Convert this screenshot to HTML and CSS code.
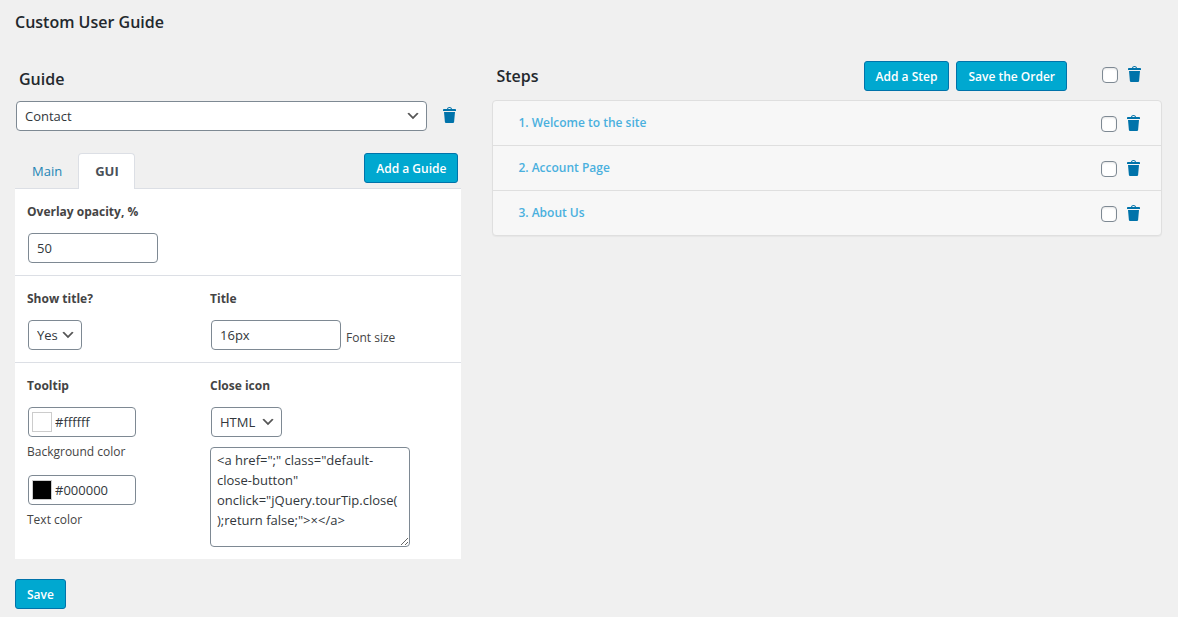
FILE: index.html
```
<!DOCTYPE html>
<html lang="en">
<head>
    <meta charset="UTF-8">
    <meta name="viewport" content="width=device-width, initial-scale=1.0">
    <title>Custom User Guide</title>
    <link rel="stylesheet" href="styles.css">
</head>
<body>
    <!-- Trash icon, reused by every delete button -->
    <svg class="sprite" aria-hidden="true">
        <symbol id="trash" viewBox="3 2 13 16">
            <path d="M12 4h3c.6 0 1 .4 1 1v1H3V5c0-.6.5-1 1-1h3c.2-1.1 1.3-2 2.5-2s2.3.9 2.5 2zM8 4h3c-.2-.6-.9-1-1.5-1S8.2 3.4 8 4zM4 7h11l-.9 10.1c0 .5-.5.9-1 .9H5.9c-.5 0-.9-.4-1-.9L4 7z"/>
        </symbol>
    </svg>

    <h1>Custom User Guide</h1>

    <div class="columns">
        <!-- Left: guide settings -->
        <form class="guide">
            <h2><label for="guide">Guide</label></h2>
            <div class="guide-select">
                <select id="guide" name="guide">
                    <option>Contact</option>
                </select>
                <button type="button" class="trash" aria-label="Delete guide"><svg><use href="#trash"/></svg></button>
            </div>

            <div class="tabs">
                <a href="#main" class="tab">Main</a>
                <a href="#gui" class="tab active">GUI</a>
                <button type="button" class="button">Add a Guide</button>
            </div>

            <div id="gui" class="panel">
                <div class="row">
                    <div class="cell">
                        <label class="title" for="opacity">Overlay opacity, %</label>
                        <input type="text" id="opacity" class="field" value="50">
                    </div>
                </div>

                <div class="row">
                    <div class="cell">
                        <label class="title" for="showTitle">Show title?</label>
                        <select id="showTitle" class="show-title">
                            <option>Yes</option>
                            <option>No</option>
                        </select>
                    </div>
                    <div class="cell">
                        <label class="title" for="fontSize">Title</label>
                        <div class="inline">
                            <input type="text" id="fontSize" class="field" value="16px">
                            <span class="hint">Font size</span>
                        </div>
                    </div>
                </div>

                <div class="row">
                    <div class="cell">
                        <span class="title">Tooltip</span>
                        <div class="color-field">
                            <input type="color" value="#ffffff" aria-label="Pick background color">
                            <input type="text" id="bgColor" value="#ffffff">
                        </div>
                        <label class="caption" for="bgColor">Background color</label>
                        <div class="color-field">
                            <input type="color" value="#000000" aria-label="Pick text color">
                            <input type="text" id="textColor" value="#000000">
                        </div>
                        <label class="caption" for="textColor">Text color</label>
                    </div>
                    <div class="cell">
                        <label class="title" for="closeIcon">Close icon</label>
                        <select id="closeIcon" class="close-icon">
                            <option>HTML</option>
                            <option>Image</option>
                        </select>
                        <textarea aria-label="Close icon HTML" spellcheck="false">&lt;a href=";" class="default-close-button" onclick="jQuery.tourTip.close();return false;"&gt;×&lt;/a&gt;</textarea>
                    </div>
                </div>
            </div>

            <button type="submit" class="button">Save</button>
        </form>

        <!-- Right: steps of the selected guide -->
        <section class="steps">
            <div class="steps-header">
                <h2>Steps</h2>
                <button type="button" class="button">Add a Step</button>
                <button type="button" class="button">Save the Order</button>
                <div class="actions">
                    <input type="checkbox" aria-label="Select all steps">
                    <button type="button" class="trash" aria-label="Delete selected steps"><svg><use href="#trash"/></svg></button>
                </div>
            </div>
            <ul class="step-list">
                <li>
                    <a href="#step1">1. Welcome to the site</a>
                    <div class="actions">
                        <input type="checkbox" aria-label="Select step 1">
                        <button type="button" class="trash" aria-label="Delete step 1"><svg><use href="#trash"/></svg></button>
                    </div>
                </li>
                <li>
                    <a href="#step2">2. Account Page</a>
                    <div class="actions">
                        <input type="checkbox" aria-label="Select step 2">
                        <button type="button" class="trash" aria-label="Delete step 2"><svg><use href="#trash"/></svg></button>
                    </div>
                </li>
                <li>
                    <a href="#step3">3. About Us</a>
                    <div class="actions">
                        <input type="checkbox" aria-label="Select step 3">
                        <button type="button" class="trash" aria-label="Delete step 3"><svg><use href="#trash"/></svg></button>
                    </div>
                </li>
            </ul>
        </section>
    </div>
</body>
</html>
```
FILE: styles.css
```
* {
    box-sizing: border-box;
}

body {
    margin: 0;
    padding: 10px 16px 8px 15px;
    background-color: #f0f0f0;
    color: #444;
    font-family: "Segoe UI", "Open Sans", sans-serif;
    font-size: 12px;
    line-height: 20px;
}

h1, h2 {
    margin: 0;
    color: #23282d;
    font-size: 16px;
    font-weight: 600;
    line-height: 24px;
}

.sprite {
    display: none;
}

.columns {
    display: grid;
    grid-template-columns: 2fr 3fr;
    gap: 31px;
    padding-top: 27px;
}

/* Form controls */
input, select, textarea, button {
    margin: 0;
    font-family: inherit;
    font-size: 13px;
    color: #32373c;
}

select, .field, .color-field, textarea {
    border: 1px solid #7e8993;
    border-radius: 4px;
    background-color: #fff;
}

select, .field {
    display: block;
    height: 30px;
    padding: 0 8px;
}

select {
    appearance: none;
    background-image: url("data:image/svg+xml,%3Csvg xmlns='http://www.w3.org/2000/svg' viewBox='0 0 20 20'%3E%3Cpath d='M5 6l5 5 5-5 2 1-7 7-7-7 2-1z' fill='%23555'/%3E%3C/svg%3E");
    background-repeat: no-repeat;
    background-position: right 5px center;
    background-size: 16px;
}

.field {
    width: 130px;
}

.button {
    height: 30px;
    padding: 0 11px;
    border: 1px solid #0073aa;
    border-radius: 3px;
    background-color: #00a8d0;
    color: #fff;
    font-size: 12px;
    font-weight: 600;
    white-space: nowrap;
    cursor: pointer;
}

.button:hover {
    background-color: #0095ba;
}

.trash {
    display: flex;
    padding: 0 0 2px;
    border: none;
    background: none;
    cursor: pointer;
}

.trash svg {
    width: 13px;
    height: 16px;
    fill: #0073aa;
}

input[type="checkbox"] {
    appearance: none;
    width: 16px;
    height: 16px;
    border: 1px solid #7e8993;
    border-radius: 4px;
    background-color: #fff;
    box-shadow: inset 0 1px 2px rgba(0, 0, 0, 0.1);
}

input[type="checkbox"]:checked {
    background-color: #0073aa;
}

/* Guide column */
.guide h2 {
    padding: 6px 4px 10px;
}

.guide-select {
    display: flex;
    align-items: center;
    gap: 16px;
    padding: 0 5px 0 1px;
}

.guide-select select {
    flex: 1;
}

.tabs {
    display: flex;
    align-items: flex-start;
    margin-top: 22px;
    padding-right: 3px;
}

.tabs .button {
    margin-left: auto;
}

.tab {
    height: 35px;
    padding: 7px 15px 8px 16px;
    border: 1px solid transparent;
    border-bottom: none;
    border-radius: 4px 4px 0 0;
    color: #1e85b5;
    font-size: 13px;
    text-decoration: none;
}

.tab.active {
    height: 36px;
    margin-bottom: -1px;
    border-color: #dcdfe5;
    background-color: #fff;
    color: #495057;
    font-weight: 700;
}

.panel {
    margin-bottom: 20px;
    background-color: #fff;
}

.row {
    display: grid;
    grid-template-columns: 41% 59%;
    border-top: 1px solid #dcdfe5;
}

.cell {
    padding: 12px;
}

.title {
    display: block;
    margin-bottom: 10px;
    font-weight: 700;
    line-height: 22px;
}

.cell > .field, .cell > select, .color-field, .inline {
    margin-left: 1px;
}

.inline {
    display: flex;
    align-items: center;
    gap: 5px;
}

.hint {
    padding-top: 5px;
}

.show-title {
    width: 54px;
}

.close-icon {
    width: 71px;
}

.color-field {
    display: flex;
    align-items: center;
    gap: 3px;
    width: 108px;
    height: 30px;
    padding: 0 3px;
}

.color-field input[type="color"] {
    appearance: none;
    flex: none;
    width: 20px;
    height: 20px;
    padding: 0;
    border: 1px solid #ccc;
    background: none;
}

.color-field input[type="color"]::-webkit-color-swatch-wrapper {
    padding: 0;
}

.color-field input[type="color"]::-webkit-color-swatch {
    border: none;
}

.color-field input[type="text"] {
    flex: 1;
    min-width: 0;
    padding: 0;
    border: none;
    outline: none;
    background: none;
}

.caption {
    display: block;
    margin: 5px 0 13px;
}

textarea {
    display: block;
    width: 200px;
    height: 100px;
    margin-top: 10px;
    padding: 2px 10px 2px 6px;
    line-height: 20px;
}

/* Steps column */
.steps-header {
    display: flex;
    align-items: center;
    gap: 7px;
    margin-bottom: 9px;
    padding-right: 21px;
}

.steps-header h2 {
    flex: 1;
    padding-left: 4px;
}

.actions {
    display: flex;
    align-items: center;
    gap: 10px;
}

.steps-header .actions {
    margin-left: 28px;
    padding-bottom: 2px;
}

.step-list {
    margin: 0;
    padding: 0;
    border: 1px solid #dfdfdf;
    border-radius: 4px;
    background-color: #f7f7f7;
    box-shadow: 0 1px 1px rgba(0, 0, 0, 0.04);
    list-style: none;
}

.step-list li {
    display: flex;
    align-items: center;
    justify-content: space-between;
    min-height: 44px;
    padding: 0 21px 0 25px;
}

.step-list li + li {
    min-height: 45px;
    border-top: 1px solid #dfdfdf;
}

.step-list .actions {
    padding-top: 2px;
}

.step-list a {
    color: #4ab0de;
    font-weight: 600;
    text-decoration: none;
}
```
